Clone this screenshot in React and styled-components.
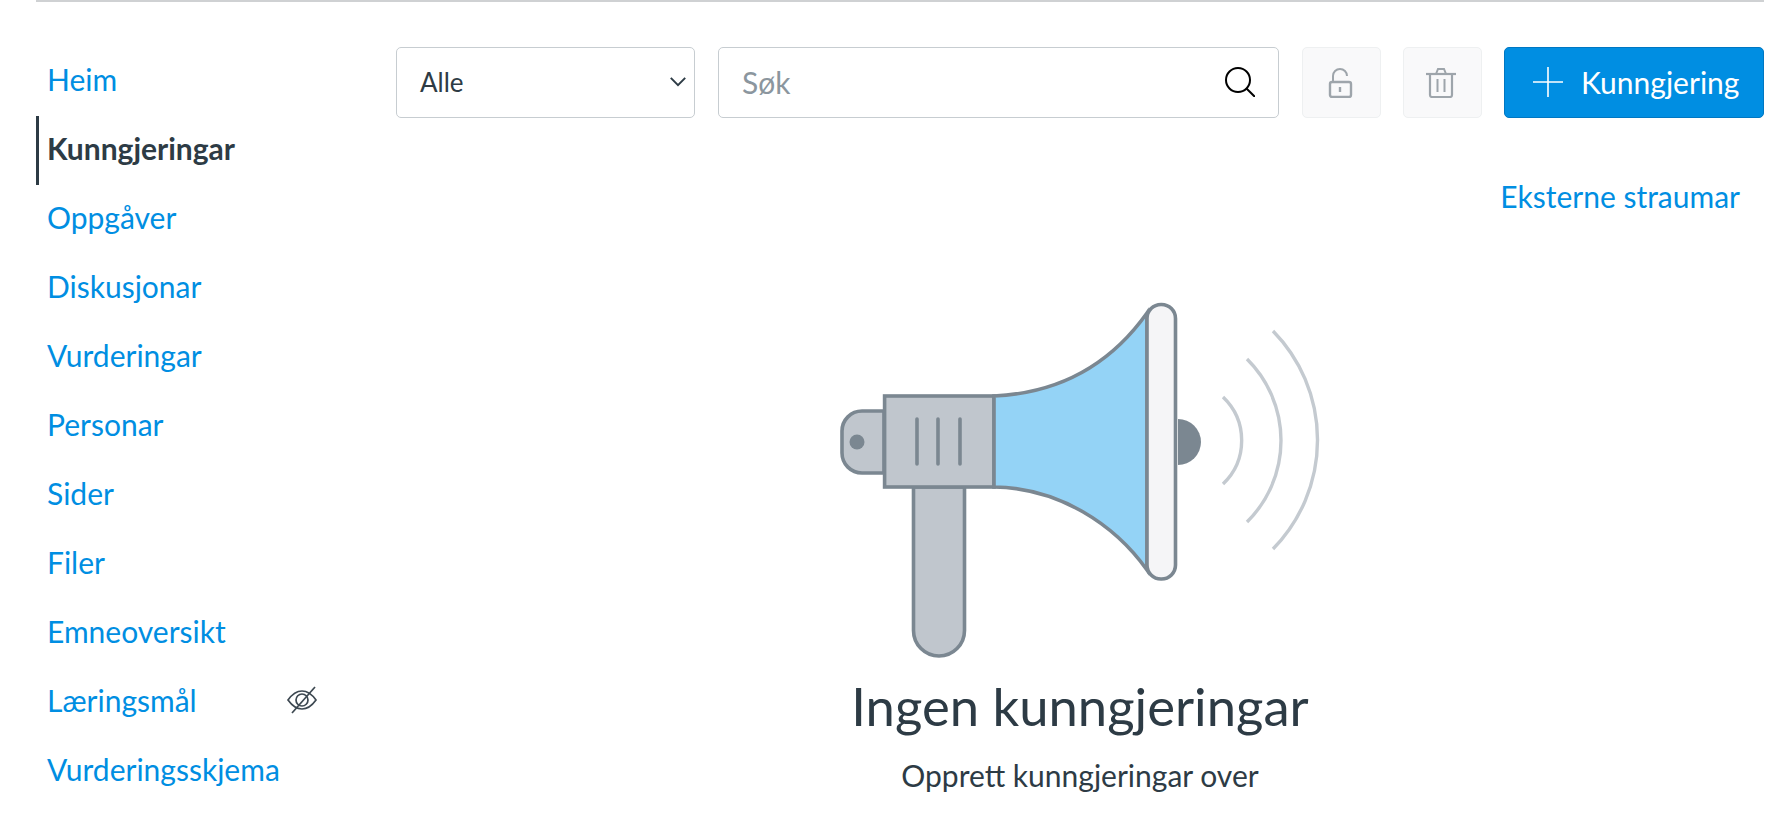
import React from "react";
import styled, { createGlobalStyle } from "styled-components";

const GlobalStyle = createGlobalStyle`
  html, body {
    margin: 0;
    height: 100%;
    background: #fff;
    overflow: hidden;
  }
  body {
    font-family: Lato, "Noto Sans", sans-serif;
    color: #2d3b45;
  }
`;

const Page = styled.div`
  padding: 0 16px 0 36px;
`;

const Divider = styled.div`
  height: 2px;
  background: #cfd1d3;
`;

const Layout = styled.div`
  display: grid;
  grid-template-columns: 281px 1fr;
  column-gap: 79px;
`;

const Sidebar = styled.nav`
  display: flex;
  flex-direction: column;
  padding-top: 45px;
`;

const NavItem = styled.a`
  display: flex;
  align-items: center;
  justify-content: space-between;
  box-sizing: border-box;
  height: 69px;
  padding: 0 0 6px 8px;
  border-left: 3px solid ${({ $active }) => ($active ? "#2d3b45" : "transparent")};
  font-size: 30px;
  font-weight: ${({ $active }) => ($active ? 700 : 400)};
  color: ${({ $active }) => ($active ? "#2d3b45" : "#008ee2")};
`;

const Main = styled.main`
  display: flex;
  flex-direction: column;
  padding-top: 45px;
`;

const Toolbar = styled.div`
  display: flex;
  align-items: stretch;
  height: 71px;
`;

const Field = styled.div`
  display: flex;
  align-items: center;
  justify-content: space-between;
  box-sizing: border-box;
  width: ${({ $width }) => $width}px;
  margin-right: ${({ $gap }) => $gap}px;
  padding: 0 ${({ $right }) => $right}px 2px 23px;
  background: #fff;
  border: 1px solid #c7cdd1;
  border-radius: 5px;
  font-size: 26px;
`;

const Placeholder = styled.span`
  color: #8b969e;
  font-size: 30px;
`;

const IconButton = styled.button`
  display: flex;
  align-items: center;
  justify-content: center;
  box-sizing: border-box;
  width: 79px;
  margin-right: ${({ $gap }) => $gap}px;
  padding: 0 3px 0 0;
  background: #f9f9fa;
  border: 1px solid #eef0f1;
  border-radius: 5px;
`;

const PrimaryButton = styled.button`
  display: flex;
  align-items: center;
  gap: 18px;
  box-sizing: border-box;
  width: 260px;
  padding: 0 0 2px 28px;
  background: #008ee2;
  border: 1px solid #0077c2;
  border-radius: 5px;
  color: #fff;
  font-family: inherit;
  font-size: 30px;
`;

const LinkRow = styled.div`
  display: flex;
  justify-content: flex-end;
  padding: 0 24px 0 0;
  margin-top: 60px;
  height: 36px;
  line-height: 36px;
`;

const TextLink = styled.a`
  color: #008ee2;
  font-size: 30px;
`;

const EmptyState = styled.section`
  display: flex;
  flex-direction: column;
  align-items: center;
  margin-top: 66px;
`;

const Heading = styled.h2`
  margin: 0;
  font-size: 52.6px;
  font-weight: 400;
  line-height: 72px;
`;

const SubText = styled.p`
  margin: 13px 0 0;
  font-size: 30px;
  line-height: 40px;
`;

const Illustration = styled.svg`
  display: block;
  width: 520px;
  height: 390px;
`;

const MEGA_STROKE = "#7b8791";

function Megaphone() {
  return (
    <Illustration viewBox="0 0 520 390" fill="none">
      <path d="M64 131H42a20 20 0 0 0-20 20v22a20 20 0 0 0 20 20h22z" fill="#c0c6cd" stroke={MEGA_STROKE} strokeWidth="3.6" />
      <circle cx="37" cy="162" r="7.5" fill={MEGA_STROKE} />
      <path d="M93.500 207h51v143.500a25.500 25.500 0 0 1-51 0z" fill="#c0c6cd" stroke={MEGA_STROKE} strokeWidth="3.6" />
      <rect x="64.600" y="116" width="109.400" height="91" fill="#c0c6cd" stroke={MEGA_STROKE} strokeWidth="3.6" />
      <path d="M97 139v45M118 139v45M140 139v45" stroke={MEGA_STROKE} strokeWidth="3.6" strokeLinecap="round" />
      <path d="M174 116C240 113 290 85 327 33V290C295 245 240 208 174 207Z" fill="#94d3f6" stroke={MEGA_STROKE} strokeWidth="3.6" />
      <path d="M358 139a23 23 0 0 1 0 46z" fill={MEGA_STROKE} />
      <rect x="327" y="24.500" width="28.500" height="274.500" rx="14" fill="#f5f5f7" stroke={MEGA_STROKE} strokeWidth="3.6" />
      <path d="M403 117A60 60 0 0 1 403 204M427 79A114.700 114.700 0 0 1 427 242M453 51A155.700 155.700 0 0 1 453 269" stroke="#c4cad0" strokeWidth="3.4" />
    </Illustration>
  );
}

const Glyph = ({ size = 30, color = "currentColor", children }) => (
  <svg width={size} height={size} viewBox="0 0 30 30" fill="none" stroke={color} strokeWidth="2">
    {children}
  </svg>
);

const NAV_ITEMS = [
  { label: "Heim" },
  { label: "Kunngjeringar", active: true },
  { label: "Oppgåver" },
  { label: "Diskusjonar" },
  { label: "Vurderingar" },
  { label: "Personar" },
  { label: "Sider" },
  { label: "Filer" },
  { label: "Emneoversikt" },
  { label: "Læringsmål", hidden: true },
  { label: "Vurderingsskjema" },
];

export default function App() {
  return (
    <Page>
      <GlobalStyle />
      <Divider />
      <Layout>
        <Sidebar>
          {NAV_ITEMS.map((item) => (
            <NavItem key={item.label} $active={item.active}>
              {item.label}
              {item.hidden && (
                <Glyph color="#3d4851">
                  <path d="M1 15C6 8 10 6 15 6s9 2 14 9c-5 7-9 9-14 9S6 22 1 15Z" strokeWidth="1.7" />
                  <circle cx="15" cy="15" r="6" strokeWidth="1.7" />
                  <path d="M28 2 5 28" strokeWidth="1.7" />
                </Glyph>
              )}
            </NavItem>
          ))}
        </Sidebar>
        <Main>
          <Toolbar>
            <Field $width={299} $gap={23} $right={7}>
              Alle
              <svg width="18" height="11" viewBox="0 0 20 12" fill="none" stroke="#2d3b45" strokeWidth="2.2">
                <path d="M2 2l8 8 8-8" />
              </svg>
            </Field>
            <Field $width={561} $gap={23} $right={23}>
              <Placeholder>Søk</Placeholder>
              <Glyph color="#000">
                <circle cx="13" cy="13" r="12" />
                <path d="M21.5 21.5 30 30" />
              </Glyph>
            </Field>
            <IconButton $gap={22}>
              <Glyph color="#9ea5ab">
                <rect x="5" y="14" width="21" height="15" rx="2" strokeWidth="2.4" />
                <path d="M8 14V8a7 7 0 0 1 14 0" />
                <path d="M15 19v5" strokeWidth="2.4" />
              </Glyph>
            </IconButton>
            <IconButton $gap={22}>
              <Glyph color="#9ea5ab">
                <path d="M0 6h30" strokeWidth="2.2" />
                <path d="M10 6l2-5h6l2 5" />
                <path d="M4 6v21a2 2 0 0 0 2 2h18a2 2 0 0 0 2-2V6" strokeWidth="2.2" />
                <path d="M11.500 11v13M18.500 11v13" />
              </Glyph>
            </IconButton>
            <PrimaryButton>
              <Glyph color="#fff">
                <path d="M15 0v30M0 15h30" strokeWidth="1.6" />
              </Glyph>
              Kunngjering
            </PrimaryButton>
          </Toolbar>
          <LinkRow>
            <TextLink>Eksterne straumar</TextLink>
          </LinkRow>
          <EmptyState>
            <Megaphone />
            <Heading>Ingen kunngjeringar</Heading>
            <SubText>Opprett kunngjeringar over</SubText>
          </EmptyState>
        </Main>
      </Layout>
    </Page>
  );
}
